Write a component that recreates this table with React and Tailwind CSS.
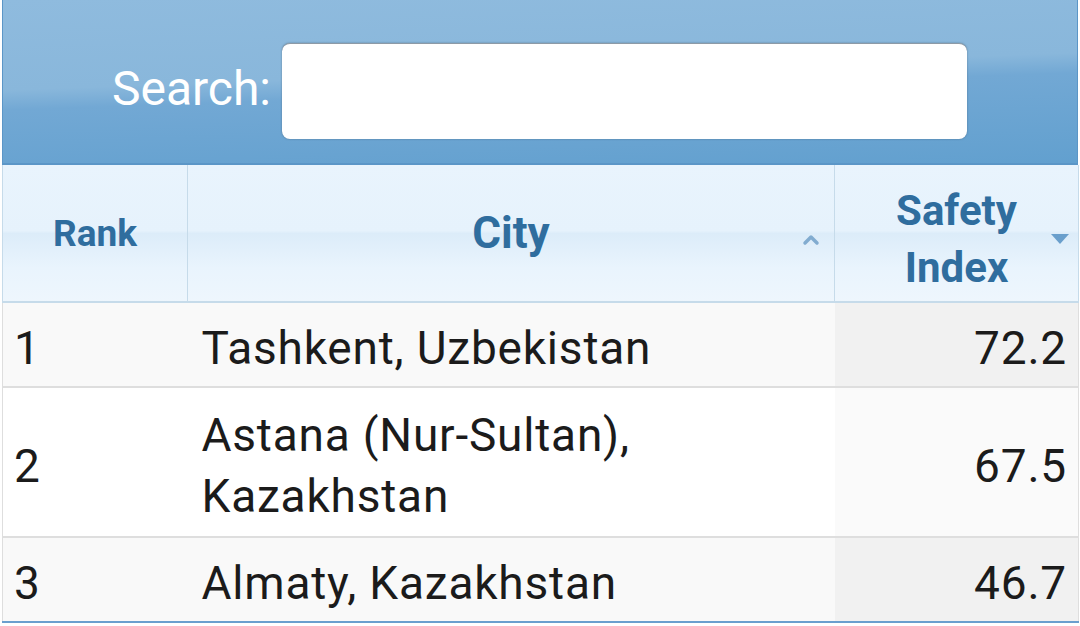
import { ChevronUp } from "lucide-react";

const rows = [
  { rank: 1, city: ["Tashkent, Uzbekistan"], safety: "72.2" },
  { rank: 2, city: ["Astana (Nur-Sultan),", "Kazakhstan"], safety: "67.5" },
  { rank: 3, city: ["Almaty, Kazakhstan"], safety: "46.7" },
];

const SortDown = () => (
  <svg width="20" height="12" viewBox="0 0 20 12" className="shrink-0">
    <path d="M1 1h18l-9 10z" fill="#6a9fcc" />
  </svg>
);

export default function App() {
  return (
    <div className="w-[1080px] h-[626px] bg-white overflow-hidden font-['Roboto',sans-serif]">
      <div className="ml-[2px] w-[1076px]">
        {/* search bar */}
        <div className="h-[165px] flex items-end justify-end pr-[110px] pb-[24px] border-x border-b-2 border-[#5b96c7] bg-[linear-gradient(178deg,#8fbbde_0%,#89b7db_45%,#72a8d4_55%,#62a0cf_100%)]">
          <label className="text-[48px] text-white leading-none mr-[11px] mb-[26px]">Search:</label>
          <div className="w-[685px] h-[96px] rounded-[8px] bg-white border-t border-[#8d9aa6] shadow-[0_0_2px_rgba(60,80,100,0.6)]" />
        </div>

        <table className="w-full table-fixed border-collapse">
          <colgroup>
            <col className="w-[185px]" />
            <col className="w-[647px]" />
            <col className="w-[244px]" />
          </colgroup>
          <thead>
            <tr className="h-[137px] bg-[linear-gradient(180deg,#e9f4fd_0%,#e6f2fc_48%,#dcecf9_50%,#e9f4fd_75%,#eef6fd_100%)] text-[#2f6d9e] font-bold">
              <th className="border-x border-b-2 border-[#c6dbea] text-[37px] leading-none text-center">Rank</th>
              <th className="border-x border-b-2 border-[#c6dbea] relative">
                <span className="text-[44px] leading-none">City</span>
                <ChevronUp className="absolute right-[11px] top-[63px] w-[24px] h-[24px] text-[#82acd0]" strokeWidth={3.5} />
              </th>
              <th className="border-x border-b-2 border-[#c6dbea] relative">
                <div className="text-[42px] leading-[57px] pt-[12px]">Safety<br />Index</div>
                <div className="absolute right-[8px] top-[68px]"><SortDown /></div>
              </th>
            </tr>
          </thead>
          <tbody className="text-[46px] text-[#1b1b1b] leading-[61px] tracking-[0.8px]">
            {rows.map((r, i) => {
              const odd = i % 2 === 0;
              return (
                <tr key={r.rank} className={`border-b-2 ${i === rows.length - 1 ? "border-[#6a9fce]" : "border-[#dedede]"} ${odd ? "bg-[#f9f9f9]" : "bg-white"}`}>
                  <td className={`pl-[11px] pt-[8px] ${r.city.length > 1 ? "h-[150px]" : "h-[85px]"} border-l border-[#dedede]`}>{r.rank}</td>
                  <td className="pl-[14px] pt-[8px]">
                    {r.city.map((c) => (
                      <div key={c}>{c}</div>
                    ))}
                  </td>
                  <td className={`text-right pr-[11px] pt-[8px] border-r border-[#dedede] ${odd ? "bg-[#f1f1f1]" : "bg-[#fafafa]"}`}>{r.safety}</td>
                </tr>
              );
            })}
          </tbody>
        </table>
      </div>
    </div>
  );
}
